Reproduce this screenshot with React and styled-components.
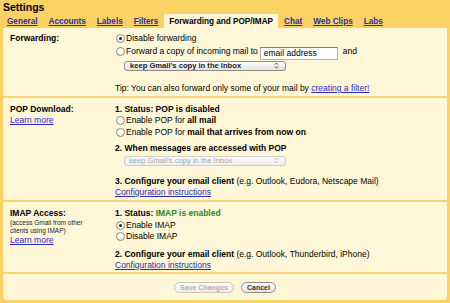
import React from "react";
import styled, { createGlobalStyle, css } from "styled-components";

const GlobalStyle = createGlobalStyle`
  html, body { margin: 0; padding: 0; }
  body { font-family: "Liberation Sans", Arial, sans-serif; }
`;

const YELLOW = "#fad163";
const PALE = "#fff7d7";
const LINK = "#2a2ab4";
const RULE = "#f5d37c";

const Page = styled.div`
  width: 450px;
  height: 303px;
  box-sizing: border-box;
  background: ${YELLOW};
  padding: 0 3px 3px 3px;
  display: flex;
  flex-direction: column;
  font-size: 8.5px;
  color: #000;
  overflow: hidden;
`;

const Title = styled.div`
  font-weight: bold;
  font-size: 10.5px;
  line-height: 14px;
  height: 14px;
`;

const TabBar = styled.div`
  display: flex;
  gap: 1px;
  height: 14px;
  margin-left: -1px;
`;

const Tab = styled.a`
  display: flex;
  align-items: center;
  padding: 0 5px;
  font-weight: bold;
  font-size: 8.2px;
  color: ${LINK};
  text-decoration: underline;
  ${(p) =>
    p.$active &&
    css`
      background: ${PALE};
      color: #000;
      text-decoration: none;
    `}
`;

const Panel = styled.div`
  flex: 1;
  background: ${PALE};
  border-radius: 0 0 4px 4px;
  display: flex;
  flex-direction: column;
`;

const Section = styled.div`
  display: grid;
  grid-template-columns: 105px 1fr;
  padding: ${(p) => p.$pt}px 0 ${(p) => p.$pb || 0}px 7px;
  border-bottom: 2px solid ${RULE};
`;

const Col = styled.div`
  display: flex;
  flex-direction: column;
  align-items: flex-start;
`;

const Label = styled.div`
  font-weight: bold;
  line-height: 11px;
`;

const Note = styled.div`
  font-size: 6.5px;
  line-height: 8px;
  color: #222;
  margin-top: ${(p) => p.$mt || 0}px;
`;

const Link = styled.a`
  color: ${LINK};
  text-decoration: underline;
`;

const LinkLine = styled.div`
  line-height: 10px;
  margin-top: ${(p) => p.$mt || 0}px;
  white-space: nowrap;
`;

const Line = styled.div`
  display: flex;
  align-items: ${(p) => (p.$top ? "flex-start" : "center")};
  line-height: 11px;
  min-height: ${(p) => p.$h || 11}px;
  margin-top: ${(p) => p.$mt || 0}px;
  white-space: nowrap;
`;

const Green = styled.b`
  color: #1e8a1e;
`;

const RadioDot = styled.span`
  width: 9px;
  height: 9px;
  box-sizing: border-box;
  border-radius: 50%;
  border: 1px solid #8c8c8c;
  background: radial-gradient(circle at 50% 35%, #ffffff 40%, #dcdcdc 100%);
  display: inline-flex;
  align-items: center;
  justify-content: center;
  flex: none;
  margin: ${(p) => (p.$top ? "1px" : "0")} 1px 0 1px;
  &::after {
    content: "";
    width: 3px;
    height: 3px;
    border-radius: 50%;
    background: ${(p) => (p.$checked ? "#222" : "transparent")};
  }
`;

const TextBox = styled.span`
  display: inline-flex;
  align-items: center;
  width: 78px;
  height: 13px;
  box-sizing: border-box;
  background: #fff;
  border: 1px solid #b0b0b0;
  border-top-color: #7d7d7d;
  padding: 0 3px;
  margin: 1px 5px 0 2px;
  font-size: 8.5px;
`;

const SelectBox = styled.div`
  width: 162px;
  height: 10px;
  box-sizing: border-box;
  margin-left: ${(p) => p.$ml}px;
  margin-top: ${(p) => p.$mt || 1}px;
  border: 1px solid #8d8d8d;
  border-radius: 3px;
  background: linear-gradient(#ffffff, #e2e2e2);
  display: flex;
  align-items: center;
  justify-content: space-between;
  padding: 0 6px 0 5px;
  font-size: 7.6px;
  font-weight: bold;
  color: #222;
  white-space: nowrap;
  ${(p) =>
    p.$disabled &&
    css`
      padding-left: 4px;
      border-color: #cfcfcf;
      background: linear-gradient(#fbfbfb, #eeeeee);
      color: #a8a8a8;
      font-weight: normal;
    `}
`;

const Arrows = ({ color }) => (
  <svg width="5" height="7" viewBox="0 0 5 7">
    <path d="M1 2.6 L2.5 1 L4 2.6 M1 4.4 L2.5 6 L4 4.4" fill="none" stroke={color} strokeWidth="0.9" />
  </svg>
);

const ButtonBar = styled.div`
  display: flex;
  justify-content: center;
  gap: 7px;
  padding-top: 8px;
`;

const Button = styled.button`
  font-family: inherit;
  font-size: 7px;
  font-weight: bold;
  height: 11px;
  line-height: 9px;
  padding: 0 5px;
  border-radius: 6px;
  border: 1px solid #8a8a8a;
  background: linear-gradient(#ffffff, #e4e4e4);
  color: #333;
  ${(p) =>
    p.$disabled &&
    css`
      border-color: #c6c6c6;
      color: #b0b0b0;
      background: linear-gradient(#fffdf5, #f1eee4);
    `}
`;

const Radio = ({ checked, children, mt }) => (
  <Line $mt={mt}>
    <RadioDot $checked={checked} />
    <span>{children}</span>
  </Line>
);

export default function App() {
  const tabs = ["General", "Accounts", "Labels", "Filters", "Forwarding and POP/IMAP", "Chat", "Web Clips", "Labs"];
  return (
    <>
      <GlobalStyle />
      <Page>
        <Title>Settings</Title>
        <TabBar>
          {tabs.map((t) => (
            <Tab key={t} $active={t === "Forwarding and POP/IMAP"}>
              {t}
            </Tab>
          ))}
        </TabBar>
        <Panel>
          <Section $pt={5} $pb={2}>
            <Col>
              <Label>Forwarding:</Label>
            </Col>
            <Col>
              <Radio checked>Disable forwarding</Radio>
              <Line $h={14} $mt={1.5} $top>
                <RadioDot $top />
                <span>Forward a copy of incoming mail to</span>
                <TextBox>email address</TextBox>
                <span>and</span>
              </Line>
              <SelectBox $ml={9}>
                <span>keep Gmail's copy in the Inbox</span>
                <Arrows color="#333" />
              </SelectBox>
              <Line $mt={12.5}>
                <span>
                  Tip: You can also forward only some of your mail by <Link>creating a filter!</Link>
                </span>
              </Line>
            </Col>
          </Section>

          <Section $pt={5.5} $pb={3.5}>
            <Col>
              <Label>POP Download:</Label>
              <LinkLine>
                <Link>Learn more</Link>
              </LinkLine>
            </Col>
            <Col>
              <Line>
                <b>1. Status: POP is disabled</b>
              </Line>
              <Radio mt={0.5}>
                Enable POP for <b>all mail</b>
              </Radio>
              <Radio mt={0.5}>
                Enable POP for <b>mail that arrives from now on</b>
              </Radio>
              <Line $mt={5}>
                <b>2. When messages are accessed with POP</b>
              </Line>
              <SelectBox $ml={9} $mt={2} $disabled>
                <span>keep Gmail's copy in the Inbox</span>
                <Arrows color="#aaa" />
              </SelectBox>
              <Line $mt={10}>
                <span>
                  <b>3. Configure your email client</b> (e.g. Outlook, Eudora, Netscape Mail)
                </span>
              </Line>
              <LinkLine>
                <Link>Configuration instructions</Link>
              </LinkLine>
            </Col>
          </Section>

          <Section $pt={5.5} $pb={2.5}>
            <Col>
              <Label>IMAP Access:</Label>
              <Note $mt={0.5}>(access Gmail from other</Note>
              <Note>clients using IMAP)</Note>
              <LinkLine $mt={-0.5}>
                <Link>Learn more</Link>
              </LinkLine>
            </Col>
            <Col>
              <Line>
                <span>
                  <b>1. Status: </b>
                  <Green>IMAP is enabled</Green>
                </span>
              </Line>
              <Radio checked mt={1}>
                Enable IMAP
              </Radio>
              <Radio mt={0.5}>Disable IMAP</Radio>
              <Line $mt={7}>
                <span>
                  <b>2. Configure your email client</b> (e.g. Outlook, Thunderbird, iPhone)
                </span>
              </Line>
              <LinkLine $mt={-0.5}>
                <Link>Configuration instructions</Link>
              </LinkLine>
            </Col>
          </Section>

          <ButtonBar>
            <Button $disabled>Save Changes</Button>
            <Button>Cancel</Button>
          </ButtonBar>
        </Panel>
      </Page>
    </>
  );
}
